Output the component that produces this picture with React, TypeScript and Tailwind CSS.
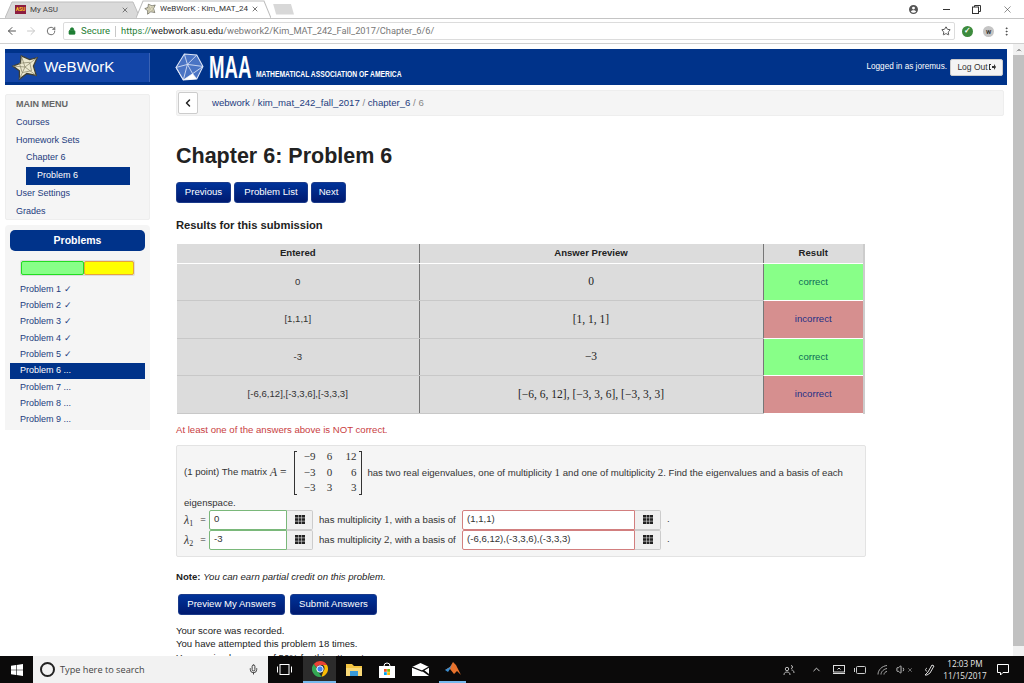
import { ArrowLeft, ArrowRight, ChevronLeft, ChevronUp, EllipsisVertical, Lock, Mic, RotateCw, Star, Volume1, X } from "lucide-react";

const navLink = "text-[#1d3c7e]";
const math = "font-['Liberation_Serif',serif]";
const navyBtn = "h-[21px] rounded-[3px] border border-[#1a3a8a] bg-linear-to-b from-[#00339a] to-[#001a70]";

const problems = [
  "Problem 1 ✓",
  "Problem 2 ✓",
  "Problem 3 ✓",
  "Problem 4 ✓",
  "Problem 5 ✓",
  "Problem 6 ...",
  "Problem 7 ...",
  "Problem 8 ...",
  "Problem 9 ...",
];

const rows = [
  { entered: "0", preview: "0", ok: true },
  { entered: "[1,1,1]", preview: "[1, 1, 1]", ok: false },
  { entered: "-3", preview: "−3", ok: true },
  { entered: "[-6,6,12],[-3,3,6],[-3,3,3]", preview: "[−6, 6, 12], [−3, 3, 6], [−3, 3, 3]", ok: false },
];

const matrix = ["−9", "6", "12", "−3", "0", "6", "−3", "3", "3"];

function TabShape({ fill }: { fill: string }) {
  return (
    <svg className="absolute inset-0 h-full w-full" viewBox="0 0 135 17" preserveAspectRatio="none">
      <path d="M0 17 L7 1 H128 L135 17" fill={fill} stroke="#bdbdbd" strokeWidth="1" />
    </svg>
  );
}

function WebworkStar({ size }: { size: number }) {
  return (
    <svg width={size} height={size} viewBox="0 0 30 30" className="shrink-0">
      <path d="M11 3 L20 7 L28 5 L24 14 L27 24 L17 22 L9 28 L9 19 L2 14 L10 11 Z" fill="#ece8cf" stroke="#3f3f34" strokeWidth="1.4" />
      <path d="M15 15 L11 3 M15 15 L28 5 M15 15 L27 24 M15 15 L9 28 M15 15 L2 14 M9 11 L20 10 L22 19 L12 21 Z" fill="none" stroke="#8a866c" strokeWidth="0.8" />
    </svg>
  );
}

function MaaLogo() {
  return (
    <svg width="29" height="29" viewBox="0 0 28 28" className="shrink-0">
      <path d="M9 1 L21 2 L27 13 L21 25 L8 26 L1 14 Z" fill="#4a74c4" stroke="#dfe7f7" strokeWidth="1" />
      <path d="M9 1 L12 11 L21 2 M12 11 L27 13 M12 11 L1 14 M12 11 L17 20 L27 13 M17 20 L21 25 M17 20 L8 26 M12 11 L8 26 M1 14 L8 26" fill="none" stroke="#dfe7f7" strokeWidth="0.8" />
      <path d="M17 20 L21 25 L8 26 Z" fill="#ffffff" />
    </svg>
  );
}

function GridIcon() {
  return (
    <svg width="10" height="9" viewBox="0 0 10 9" fill="#222222">
      <rect x="0" y="0" width="3" height="2.6" />
      <rect x="3.5" y="0" width="3" height="2.6" />
      <rect x="7" y="0" width="3" height="2.6" />
      <rect x="0" y="3.2" width="3" height="2.6" />
      <rect x="3.5" y="3.2" width="3" height="2.6" />
      <rect x="7" y="3.2" width="3" height="2.6" />
      <rect x="0" y="6.4" width="3" height="2.6" />
      <rect x="3.5" y="6.4" width="3" height="2.6" />
      <rect x="7" y="6.4" width="3" height="2.6" />
    </svg>
  );
}

function AnswerRow({ n, mult, lambda, basis }: { n: string; mult: string; lambda: string; basis: string }) {
  return (
    <div className="flex h-[20px] items-center">
      <span className={`${math} w-[13px] text-[12px] italic`}>
        λ<sub className="text-[8px] not-italic">{n}</sub>
      </span>
      <span className="w-[12px] text-center">=</span>
      <div className="flex h-[20px] w-[78px] items-center rounded-l-[2px] border border-[#7ab87a] bg-white pl-[4px]">{lambda}</div>
      <div className="flex h-[20px] w-[26px] items-center justify-center rounded-r-[2px] border border-l-0 border-[#cccccc] bg-[#f0f0f0]">
        <GridIcon />
      </div>
      <span className="ml-[6px] w-[143px] whitespace-nowrap">
        has multiplicity <span className={`${math} text-[11px]`}>{mult}</span>, with a basis of
      </span>
      <div className="flex h-[20px] w-[173px] items-center rounded-l-[2px] border border-[#d27f7f] bg-white pl-[4px]">{basis}</div>
      <div className="flex h-[20px] w-[26px] items-center justify-center rounded-r-[2px] border border-l-0 border-[#cccccc] bg-[#f0f0f0]">
        <GridIcon />
      </div>
      <span className="ml-[6px]">.</span>
    </div>
  );
}

export default function App() {
  return (
    <div className="flex h-[683px] w-[1024px] flex-col overflow-hidden bg-white font-['Liberation_Sans',Arial,sans-serif] text-[9px] text-[#333333]">
      {/* tab strip */}
      <div className="flex h-[19px] shrink-0 items-end border-b border-[#c4c4c4] pl-[5px] font-['Roboto',sans-serif] text-[8px]">
        <div className="relative h-[17px] w-[135px]">
          <TabShape fill="#dadada" />
          <div className="relative flex h-full items-center pl-[10px] pr-[11px] text-[#444444]">
            <span className="flex h-[9px] w-[11px] items-center justify-center bg-[#8c1d40] text-[5px] font-bold text-[#ffc627]">ASU</span>
            <span className="ml-[4px] flex-1">My ASU</span>
            <X size={8} />
          </div>
        </div>
        <div className="relative -ml-[4px] h-[18px] w-[135px]">
          <TabShape fill="#ffffff" />
          <div className="relative flex h-full items-center pl-[8px] pr-[12px] text-[#333333]">
            <WebworkStar size={12} />
            <span className="ml-[4px] flex-1 overflow-hidden whitespace-nowrap">WeBWorK : Kim_MAT_24</span>
            <X size={8} className="ml-[2px]" />
          </div>
        </div>
        <div className="ml-[2px] h-[11px] w-[21px] self-center bg-[#d8d8d8] [clip-path:polygon(0_0,85%_0,100%_100%,15%_100%)]" />
        <div className="ml-auto flex h-full items-center self-start pr-[11px] text-[#333333]">
          <svg width="9" height="9" viewBox="0 0 11 11" fill="#555555">
            <path d="M5.5 0a5.5 5.5 0 1 0 0 11 5.5 5.5 0 0 0 0-11Zm0 2a1.8 1.8 0 1 1 0 3.6 1.8 1.8 0 0 1 0-3.6Zm0 7.6a4.2 4.2 0 0 1-3.3-1.6c.6-1 2-1.5 3.3-1.5s2.7.5 3.3 1.5a4.2 4.2 0 0 1-3.3 1.6Z" />
          </svg>
          <span className="ml-[25px] h-[1px] w-[7px] bg-[#333333]" />
          <svg width="9" height="9" viewBox="0 0 9 9" fill="none" stroke="#333333" className="ml-[22px]">
            <rect x="0.5" y="2" width="6" height="6.5" />
            <path d="M2.5 2 V0.5 H8.5 V6.5 H6.5" />
          </svg>
          <X size={11} strokeWidth={1.2} className="ml-[21px]" />
        </div>
      </div>

      {/* toolbar */}
      <div className="flex h-[25px] shrink-0 items-center border-b border-[#d0d0d0] font-['Roboto',sans-serif]">
        <ArrowLeft size={12} className="ml-[6px] text-[#555555]" />
        <ArrowRight size={12} className="ml-[7px] text-[#c8c8c8]" />
        <RotateCw size={10} className="ml-[9px] text-[#555555]" />
        <div className="ml-[7px] flex h-[18px] w-[892px] items-center rounded-[2px] border border-[#dcdcdc] pl-[4px] text-[9.25px]">
          <Lock size={8} className="fill-[#1e7e34] text-[#1e7e34]" />
          <span className="ml-[5px] text-[9.5px] text-[#1e7e34]">Secure</span>
          <span className="ml-[5px] h-[11px] w-[1px] bg-[#c8c8c8]" />
          <span className="ml-[5px] whitespace-nowrap text-[#777777]">
            <span className="text-[#1e7e34]">https://</span>
            <span className="text-[#222222]">webwork.asu.edu</span>/webwork2/Kim_MAT_242_Fall_2017/Chapter_6/6/
          </span>
          <Star size={10} className="ml-auto mr-[3px] text-[#333333]" />
        </div>
        <span className="ml-[7px] flex h-[11px] w-[11px] items-center justify-center rounded-full bg-[#3d8b3d] text-[8px] font-bold text-white">✓</span>
        <span className="ml-[10px] flex h-[11px] w-[11px] items-center justify-center rounded-full bg-[#c4c4c4] text-[6px] font-bold">W</span>
        <EllipsisVertical size={11} className="ml-[7px] text-[#444444]" />
      </div>

      {/* page + scrollbar */}
      <div className="flex min-h-0 flex-1">
        <div className="min-w-0 flex-1 overflow-hidden pl-[5px] pr-[6px] pt-[5px]">
          <header className="flex h-[36px] items-center bg-[#00338a] pr-[4px] text-white">
            <div className="flex h-[29px] w-[145px] items-center border-r border-[#3a62b4] bg-[#1446a8] pl-[6px]">
              <WebworkStar size={28} />
              <span className="ml-[5px] text-[15.2px]">WeBWorK</span>
            </div>
            <div className="ml-[25px] flex items-center">
              <MaaLogo />
              <span className="ml-[5px] w-[43px] origin-left scale-x-[0.6] text-[31px] leading-none font-bold">MAA</span>
              <span className="mt-[14px] ml-[4px] w-[147px] origin-left scale-x-[0.71] text-[9.5px] font-bold whitespace-nowrap">MATHEMATICAL ASSOCIATION OF AMERICA</span>
            </div>
            <span className="ml-auto text-[8.2px]">Logged in as joremus.</span>
            <div className="ml-[3px] flex h-[17px] w-[53px] items-center justify-center gap-[1px] rounded-[2px] border border-[#cccccc] bg-[#f4f4f4] text-[8.5px] text-[#333333]">
              Log Out
              <svg width="7" height="6" viewBox="0 0 7 6" fill="#333333">
                <path d="M0 0h2v1H1v4h1v1H0ZM3 2h2V0l2 3-2 3V4H3Z" />
              </svg>
            </div>
          </header>

          <div className="flex gap-[26px]">
            {/* sidebar */}
            <aside className="mt-[9px] w-[145px] shrink-0">
              <nav className="h-[126px] rounded-[2px] border border-[#eeeeee] bg-[#f5f5f5] pl-[10px] pt-[1px] leading-[17.8px]">
                <div className="font-bold text-[#666666]">MAIN MENU</div>
                <div className={navLink}>Courses</div>
                <div className={navLink}>Homework Sets</div>
                <div className={`${navLink} pl-[10px]`}>Chapter 6</div>
                <div className="ml-[10px] h-[18px] w-[104px] bg-[#00338a] pl-[11px] text-white">Problem 6</div>
                <div className={navLink}>User Settings</div>
                <div className={navLink}>Grades</div>
              </nav>
              <div className="mt-[5px] h-[205px] rounded-t-[4px] bg-[#f5f5f5] px-[5px] pt-[5px]">
                <div className="flex h-[21px] items-center justify-center rounded-[5px] bg-[#00338a] text-[10.5px] font-bold text-white">Problems</div>
                <div className="ml-[10px] mt-[9px] flex h-[16px] w-[115px] rounded-[2px] bg-[#dddddd] p-[1px]">
                  <div className="w-[63px] rounded-[2px] border border-[#22dd22] bg-[#88ff88]" />
                  <div className="w-[50px] rounded-[2px] border border-[#e8a33a] bg-[#ffff00]" />
                </div>
                <ul className="mt-[5.5px]">
                  {problems.map((p, i) => (
                    <li key={p} className={`flex h-[16.3px] items-center pl-[10px] ${i === 5 ? "bg-[#00338a] text-white" : navLink}`}>
                      {p}
                    </li>
                  ))}
                </ul>
              </div>
            </aside>

            {/* main column */}
            <main className="w-[828px] shrink-0 text-[9.6px]">
              <div className="mt-[5px] flex h-[26px] items-center rounded-[2px] border border-[#eeeeee] bg-[#f5f5f5] pl-[1px]">
                <div className="flex h-[22px] w-[20px] items-center justify-center rounded-[2px] border border-[#cccccc] bg-white">
                  <ChevronLeft size={12} strokeWidth={3} className="text-[#222222]" />
                </div>
                <span className="ml-[14px] text-[#1d3c7e]">
                  webwork <span className="text-[#888888]">/</span> kim_mat_242_fall_2017 <span className="text-[#888888]">/</span> chapter_6 <span className="text-[#888888]">/ 6</span>
                </span>
              </div>

              <h1 className="mt-[25px] text-[21.5px] leading-[30px] font-bold text-[#222222]">Chapter 6: Problem 6</h1>

              <div className="mt-[11px] flex gap-[3px] text-white">
                <button className={`${navyBtn} w-[55px]`}>Previous</button>
                <button className={`${navyBtn} w-[74px]`}>Problem List</button>
                <button className={`${navyBtn} w-[35px]`}>Next</button>
              </div>

              <h2 className="mt-[15px] text-[11.2px] leading-[14px] font-bold text-[#222222]">Results for this submission</h2>

              <table className="mt-[12px] ml-[1px] w-[688px] table-fixed border-r-2 border-b border-r-[#cccccc] border-b-[#999999] bg-[#dcdcdc] text-center">
                <thead>
                  <tr className="h-[19px] font-bold text-[#222222]">
                    <th className="w-[242px] border-r border-b border-r-[#777777] border-b-white">Entered</th>
                    <th className="w-[344px] border-r border-b border-r-[#777777] border-b-white">Answer Preview</th>
                    <th className="border-b border-b-white">Result</th>
                  </tr>
                </thead>
                <tbody>
                  {rows.map((r) => (
                    <tr key={r.entered} className="h-[37.5px]">
                      <td className="border-r border-b border-r-[#777777] border-b-[#c8c8c8]">{r.entered}</td>
                      <td className={`${math} border-r border-b border-r-[#777777] border-b-[#c8c8c8] text-[11.5px] text-[#222222]`}>{r.preview}</td>
                      <td className={`border-b border-b-white ${r.ok ? "bg-[#88ff88] text-[#0d6b57]" : "bg-[#d68f8f] text-[#1d2f86]"}`}>{r.ok ? "correct" : "incorrect"}</td>
                    </tr>
                  ))}
                </tbody>
              </table>

              <p className="mt-[10px] leading-[12px] text-[#c9403f]">At least one of the answers above is NOT correct.</p>

              <section className="mt-[9px] h-[112px] w-[690px] rounded-[2px] border border-[#e3e3e3] bg-[#f5f5f5] pl-[7px] pt-[5px]">
                <div className="flex h-[44px] items-center whitespace-nowrap">
                  <span>(1 point) The matrix</span>
                  <span className={`${math} ml-[3px] text-[11.5px]`}>
                    <i>A</i> =
                  </span>
                  <div className="ml-[8px] flex h-[44px] w-[68px]">
                    <div className="w-[3px] border-y border-l border-[#333333]" />
                    <div className={`${math} grid flex-1 grid-cols-[18px_28px_13px] content-center items-center text-right text-[11px] leading-[15.5px]`}>
                      {matrix.map((m, i) => (
                        <span key={i} className={i % 3 === 1 ? "text-center" : ""}>
                          {m}
                        </span>
                      ))}
                    </div>
                    <div className="w-[3px] border-y border-r border-[#333333]" />
                  </div>
                  <span className="ml-[5px]">
                    has two real eigenvalues, one of multiplicity <span className={`${math} text-[11px]`}>1</span> and one of multiplicity <span className={`${math} text-[11px]`}>2</span>. Find the eigenvalues and a basis of each
                  </span>
                </div>
                <div className="mt-[2px] leading-[11px]">eigenspace.</div>
                <div className="mt-[2px]">
                  <AnswerRow n="1" mult="1" lambda="0" basis="(1,1,1)" />
                  <AnswerRow n="2" mult="2" lambda="-3" basis="(-6,6,12),(-3,3,6),(-3,3,3)" />
                </div>
              </section>

              <p className="mt-[14px] leading-[12px] text-[#222222]">
                <b>Note:</b> <i>You can earn partial credit on this problem.</i>
              </p>

              <div className="ml-[2px] mt-[11px] flex gap-[5px] text-white">
                <button className={`${navyBtn} w-[107px]`}>Preview My Answers</button>
                <button className={`${navyBtn} w-[87px]`}>Submit Answers</button>
              </div>

              <div className="mt-[9px] leading-[13.8px] text-[#222222]">
                <p>Your score was recorded.</p>
                <p>You have attempted this problem 18 times.</p>
                <p>You received a score of 50% for this attempt.</p>
              </div>
            </main>
          </div>
        </div>

        {/* scrollbar */}
        <div className="flex w-[11px] shrink-0 flex-col items-center bg-[#f1f1f1]">
          <ChevronUp size={8} strokeWidth={3} className="mt-[2px] fill-[#a0a0a0] text-[#a0a0a0]" />
          <div className="mt-[1px] w-full flex-1 bg-[#c1c1c1]" />
          <div className="h-[10px]" />
        </div>
      </div>

      {/* taskbar */}
      <footer className="flex h-[27px] shrink-0 items-center bg-[#0b0a0a] text-white">
        <svg width="12" height="12" viewBox="0 0 12 12" fill="#ffffff" className="ml-[11px]">
          <path d="M0 1.7 5 1v4.7H0ZM5.6.9 12 0v5.7H5.6ZM0 6.3h5V11l-5-.7ZM5.6 6.3H12V12l-6.4-.9Z" />
        </svg>
        <div className="ml-[10px] flex h-[27px] w-[235px] items-center bg-[#f2f2f2] pl-[7px] font-['Open_Sans',sans-serif] text-[9.2px] text-[#444444]">
          <span className="h-[15px] w-[15px] rounded-full border-2 border-[#222222]" />
          <span className="ml-[5px] flex-1">Type here to search</span>
          <Mic size={11} className="mr-[9px] text-[#333333]" />
        </div>
        <svg width="15" height="11" viewBox="0 0 15 11" fill="none" stroke="#ffffff" className="ml-[9px]">
          <rect x="3" y="0.5" width="9" height="10" />
          <path d="M0.5 2.5v6M14.5 2.5v6" />
        </svg>
        <div className="ml-[11px] flex h-[27px] w-[33px] items-center justify-center border-b-2 border-[#76b9ed] bg-[#2c2c2c]">
          <svg width="16" height="16" viewBox="0 0 16 16">
            <path d="M8 0a8 8 0 0 1 7 4H8a4 4 0 0 0-3.7 2.5L1.8 2.9A8 8 0 0 1 8 0Z" fill="#ea4335" />
            <path d="M15 4a8 8 0 0 1-5.5 11.8L11.4 10A4 4 0 0 0 11 4Z" fill="#fbbc05" />
            <path d="M1.8 2.9 4.3 6.5 7 11.9 9.5 15.8A8 8 0 0 1 1.8 2.9Z" fill="#34a853" />
            <circle cx="8" cy="8" r="3.2" fill="#4285f4" stroke="#ffffff" />
          </svg>
        </div>
        <svg width="16" height="14" viewBox="0 0 16 14" className="ml-[10px]">
          <path d="M0 1h6l2 2h8v10H0Z" fill="#f4c542" />
          <path d="M0 5h16v8H0Z" fill="#f9d978" />
          <path d="M4 8h8v5H4Z" fill="#3a9ad9" />
        </svg>
        <svg width="16" height="16" viewBox="0 0 16 16" className="ml-[17px]">
          <path d="M5 4a3 3 0 0 1 6 0" fill="none" stroke="#ffffff" />
          <path d="M0 4h16v12H0Z" fill="#ffffff" />
          <path d="M5 7h2.8v2.8H5Z" fill="#f25022" />
          <path d="M8.2 7H11v2.8H8.2Z" fill="#7fba00" />
          <path d="M5 10.2h2.8V13H5Z" fill="#00a4ef" />
          <path d="M8.2 10.2H11V13H8.2Z" fill="#ffb900" />
        </svg>
        <svg width="17" height="13" viewBox="0 0 17 13" className="ml-[17px]">
          <path d="M0 4 8.5 0 17 4v9H0Z" fill="#ffffff" />
          <path d="M0 4 10 8 17 4" fill="none" stroke="#0b0a0a" strokeWidth="1.2" />
          <path d="M12 7 17 11V13L10 8Z" fill="#0b0a0a" />
        </svg>
        <div className="ml-[10px] flex h-[27px] w-[27px] items-center justify-center border-b-2 border-[#76b9ed]">
          <svg width="16" height="15" viewBox="0 0 16 15">
            <path d="M0 9 5 6 8 1 11 4 16 14 12 10 9 13 5 8Z" fill="#e8722c" />
            <path d="M0 9 5 6 7 3 5 8 3 11Z" fill="#3c8dcf" />
          </svg>
        </div>

        {/* tray */}
        <div className="ml-auto flex items-center pr-[15px] font-['Open_Sans',sans-serif]">
          <svg width="12" height="11" viewBox="0 0 12 11" fill="none" stroke="#cccccc" strokeWidth="0.9">
            <circle cx="4" cy="5" r="1.7" />
            <path d="M1 11c0-2 1-3 3-3s3 1 3 3M8 1.5a1.5 1.5 0 1 1 0 3M8.5 6c1.5 0 2.5 1 2.5 3" />
          </svg>
          <ChevronUp size={11} className="ml-[16px] text-[#dddddd]" />
          <svg width="12" height="9" viewBox="0 0 12 9" fill="none" stroke="#dddddd" className="ml-[11px]">
            <rect x="0.5" y="0.5" width="11" height="6.5" />
            <path d="M0 8.5h12M4.5 4.5 6 3l1.5 1.5" />
          </svg>
          <svg width="12" height="8" viewBox="0 0 12 8" fill="none" stroke="#cccccc" className="ml-[9px]">
            <rect x="2.5" y="0.5" width="9" height="7" rx="1" />
            <path d="M0.5 2v4" />
          </svg>
          <svg width="11" height="10" viewBox="0 0 11 10" fill="none" stroke="#aaaaaa" className="ml-[11px]">
            <path d="M1 9.5C1 5 5 1 10 .5M4 9.5c0-3 3-5.5 6-6M7 9.5c0-1.5 1.5-3 3-3" />
          </svg>
          <Volume1 size={11} className="ml-[8px] text-[#cccccc]" />
          <X size={6} className="text-[#cccccc]" />
          <svg width="11" height="12" viewBox="0 0 11 12" fill="none" stroke="#dddddd" className="ml-[11px]">
            <path d="M1 11 L4 8 L8 1 L10 2 L6 9 L3 11 Z M3 4c-2 1-2 3 0 3" />
          </svg>
          <div className="ml-[7px] w-[46px] text-center text-[8.2px] leading-[12px] text-[#e8e8e8]">
            <div>12:03 PM</div>
            <div>11/15/2017</div>
          </div>
          <svg width="12" height="12" viewBox="0 0 12 12" fill="none" stroke="#ffffff" className="ml-[9px]">
            <path d="M.5.5h11v8H6L3.5 11V8.5h-3Z" />
          </svg>
        </div>
      </footer>
    </div>
  );
}
